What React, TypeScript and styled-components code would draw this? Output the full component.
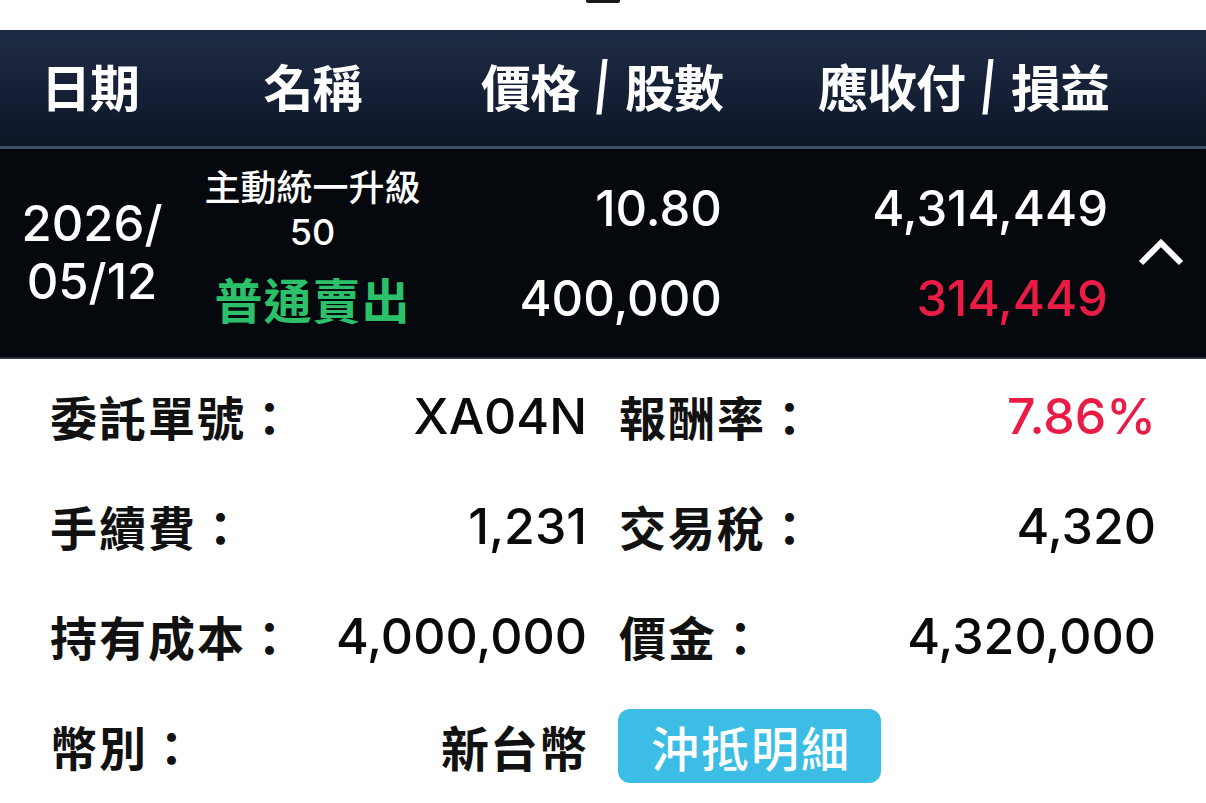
import React from "react";
import styled, { createGlobalStyle } from "styled-components";

const Global = createGlobalStyle`
  html, body { margin: 0; padding: 0; background: #ffffff; }
  body {
    font-family: Inter, "Noto Sans CJK TC", "Noto Sans", sans-serif;
    -webkit-font-smoothing: antialiased;
  }
`;

const Page = styled.div`
  width: 1206px;
  height: 803px;
  overflow: hidden;
  background: #ffffff;
`;

const TopStrip = styled.div`
  height: 30px;
  display: flex;
  justify-content: center;
`;

const Handle = styled.div`
  width: 34px;
  height: 3px;
  background: #1b1b1b;
  border-radius: 0 0 2px 2px;
`;

const cols = "180px 265px 277px 386px 1fr";

const Header = styled.div`
  height: 116px;
  display: grid;
  grid-template-columns: ${cols};
  align-items: center;
  background: linear-gradient(180deg, #202c45 0%, #152036 55%, #0e1626 100%);
  border-bottom: 3px solid #3e5266;
`;

const HeadCell = styled.div<{ $align: "center" | "right" }>`
  text-align: ${(p) => p.$align};
  color: #ffffff;
  font-family: "Noto Sans CJK TC", sans-serif;
  font-weight: 700;
  font-size: 50px;
  letter-spacing: -1px;
  line-height: 60px;
  white-space: nowrap;
  margin-right: ${(p) => (p.$align === "right" ? "-1px" : "0")};
  margin-bottom: 6px;
`;

const Slash = styled.span`
  display: inline-block;
  width: 46px;
  text-align: center;
  font-family: "Liberation Sans", sans-serif;
  font-size: 74px;
  font-weight: 700;
  letter-spacing: 0;
  line-height: 50px;
  vertical-align: -6px;
  transform: scaleX(0.58);
`;

const Row = styled.div`
  height: 208px;
  display: grid;
  grid-template-columns: ${cols};
  background: #05080d;
  border-bottom: 2px solid #2c333d;
`;

const DateCell = styled.div`
  display: flex;
  flex-direction: column;
  align-items: center;
  justify-content: center;
  color: #ffffff;
  font-size: 49px;
  font-weight: 500;
  line-height: 58px;
  padding-left: 4px;
`;

const NameCell = styled.div`
  display: flex;
  flex-direction: column;
  align-items: center;
  padding-top: 17px;
  gap: 14px;
`;

const NameText = styled.div`
  color: #ffffff;
  font-size: 36px;
  font-weight: 500;
  line-height: 44px;
  text-align: center;
`;

const SideText = styled.div`
  color: #2cc06b;
  font-family: "Noto Sans CJK TC", sans-serif;
  font-weight: 700;
  font-size: 48px;
  letter-spacing: 1px;
  line-height: 60px;
`;

const NumCell = styled.div`
  display: flex;
  flex-direction: column;
  align-items: flex-end;
  padding-top: 30px;
  gap: 30px;
`;

const Num = styled.div<{ $red?: boolean }>`
  color: ${(p) => (p.$red ? "#ea1b44" : "#ffffff")};
  font-size: 49px;
  font-weight: 500;
  line-height: 60px;
`;

const ChevronCell = styled.div`
  display: flex;
  align-items: center;
  justify-content: center;
  padding-left: 8px;
`;

const Details = styled.div`
  display: grid;
  grid-template-columns: 1fr 1fr;
  column-gap: 32px;
  padding: 2px 50px 0 50px;
  grid-auto-rows: 110px;
`;

const Field = styled.div`
  display: flex;
  align-items: center;
  justify-content: space-between;
`;

const Label = styled.span`
  font-family: "Noto Sans CJK TC", sans-serif;
  font-weight: 700;
  font-size: 47px;
  letter-spacing: 2px;
  color: #111111;
  line-height: 60px;
`;

const Value = styled.span<{ $red?: boolean }>`
  font-size: 50px;
  font-weight: 500;
  color: ${(p) => (p.$red ? "#ea1b44" : "#0a0a0a")};
  line-height: 60px;
`;

const CjkValue = styled.span`
  font-family: "Noto Sans CJK TC", sans-serif;
  font-weight: 700;
  font-size: 48px;
  color: #111111;
  line-height: 60px;
  letter-spacing: 1px;
  margin-right: -1px;
`;

const ActionButton = styled.button`
  height: 74px;
  padding: 0 30px 0 33px;
  border: none;
  border-radius: 12px;
  background: #3bbde6;
  color: #ffffff;
  font-family: "Noto Sans CJK TC", sans-serif;
  font-weight: 500;
  font-size: 48px;
  letter-spacing: 2px;
  line-height: 74px;
  margin-left: -1px;
  cursor: pointer;
`;

const LeftField = styled.div`
  display: flex;
  align-items: center;
`;

const ChevronUp = () => (
  <svg width="48" height="32" viewBox="0 0 48 32" fill="none">
    <polyline
      points="4,26 24,6 44,26"
      stroke="#ffffff"
      strokeWidth="6"
      strokeLinecap="butt"
      strokeLinejoin="miter"
      fill="none"
    />
  </svg>
);

export default function App() {
  return (
    <Page>
      <Global />
      <TopStrip>
        <Handle />
      </TopStrip>
      <Header>
        <HeadCell $align="center">日期</HeadCell>
        <HeadCell $align="center">名稱</HeadCell>
        <HeadCell $align="right">
          價格<Slash>/</Slash>股數
        </HeadCell>
        <HeadCell $align="right">
          應收付<Slash>/</Slash>損益
        </HeadCell>
        <div />
      </Header>
      <Row>
        <DateCell>
          <div>2026/</div>
          <div>05/12</div>
        </DateCell>
        <NameCell>
          <NameText>
            主動統一升級
            <br />
            50
          </NameText>
          <SideText>普通賣出</SideText>
        </NameCell>
        <NumCell>
          <Num>10.80</Num>
          <Num>400,000</Num>
        </NumCell>
        <NumCell>
          <Num>4,314,449</Num>
          <Num $red>314,449</Num>
        </NumCell>
        <ChevronCell>
          <ChevronUp />
        </ChevronCell>
      </Row>
      <Details>
        <Field>
          <Label>委託單號：</Label>
          <Value>XA04N</Value>
        </Field>
        <Field>
          <Label>報酬率：</Label>
          <Value $red>7.86%</Value>
        </Field>
        <Field>
          <Label>手續費：</Label>
          <Value>1,231</Value>
        </Field>
        <Field>
          <Label>交易稅：</Label>
          <Value>4,320</Value>
        </Field>
        <Field>
          <Label>持有成本：</Label>
          <Value>4,000,000</Value>
        </Field>
        <Field>
          <Label>價金：</Label>
          <Value>4,320,000</Value>
        </Field>
        <Field>
          <Label>幣別：</Label>
          <CjkValue>新台幣</CjkValue>
        </Field>
        <LeftField>
          <ActionButton>沖抵明細</ActionButton>
        </LeftField>
      </Details>
    </Page>
  );
}
